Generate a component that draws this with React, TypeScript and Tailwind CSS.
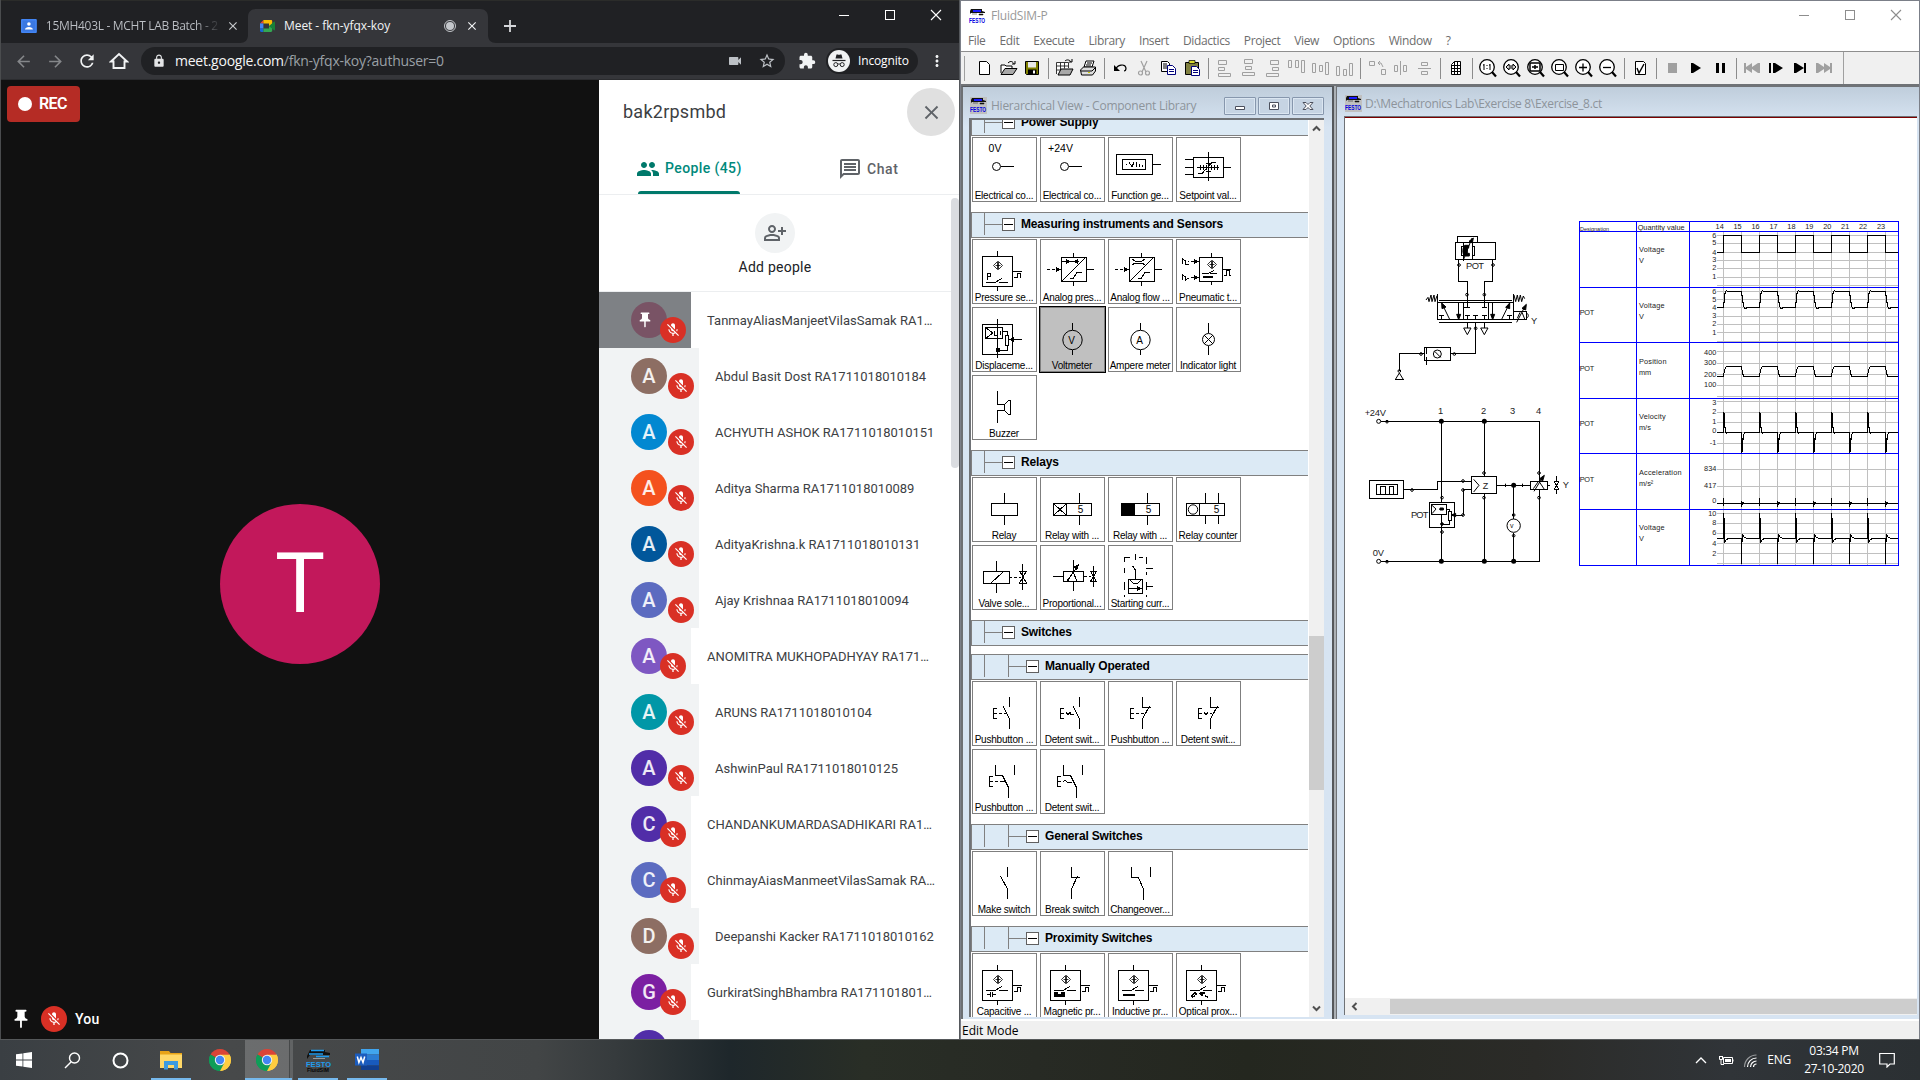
import React from "react";
import {
  MdArrowBack, MdArrowForward, MdRefresh, MdLock, MdVideocam, MdStarBorder, MdExtension, MdMoreVert,
  MdPeople, MdOutlineMessage, MdOutlinePersonAddAlt, MdMicOff, MdPushPin, MdClose,
} from "react-icons/md";

const UI = "font-['Open_Sans',sans-serif]";
const ROBOTO = "font-[Roboto,sans-serif]";

/* ---------- Browser window ---------- */

function WinControls({ color }: { color: string }) {
  return (
    <svg width="110" height="14" viewBox="0 0 110 14" fill="none" stroke={color} shapeRendering="crispEdges" className="block">
      <path d="M2 7.5h10M48.5 2.5h9v9h-9z" />
      <path d="M94 2l10 10M104 2l-10 10" shapeRendering="auto" strokeWidth="1.1" />
    </svg>
  );
}

function TabStrip() {
  return (
    <div className="flex h-[43px] bg-[#202124] border-t border-[#2b2c2a]">
      <div className="flex items-center w-[239px] h-[34px] mt-2 pl-5">
        <svg width="16" height="14" viewBox="0 0 16 14">
          <rect width="16" height="14" rx="1" fill="#4285f4" />
          <rect x="1.5" y="1.5" width="13" height="11" fill="#3b78e0" />
          <circle cx="8" cy="5" r="1.8" fill="#fff" />
          <path d="M4 10.5c0-3.4 8-3.4 8 0z" fill="#fff" />
        </svg>
        <span className={`${UI} ml-[9px] w-[178px] overflow-hidden whitespace-nowrap text-[12px] leading-4 tracking-[-0.3px] bg-gradient-to-r from-[#bdc1c6] from-85% to-[#202124] bg-clip-text text-transparent`}>15MH403L - MCHT LAB Batch - 2</span>
        <MdClose className="ml-1 size-3.5 text-[#c8cacd]" />
      </div>
      <div className="relative mt-2 flex h-[34px] w-[256px] items-center pl-[20px]">
        <svg className="absolute inset-0" width="256" height="34" viewBox="0 0 256 34">
          <path d="M0 34c5 0 8-3 8-8V8c0-5 3-8 8-8h224c5 0 8 3 8 8v18c0 5 3 8 8 8z" fill="#35363a" />
        </svg>
        <svg className="relative" width="16" height="12" viewBox="0 0 16 12">
          <path d="M3.4 0v3.4H0z" fill="#ea4335" />
          <path d="M0 3.4h3.4v5.2H0z" fill="#4285f4" />
          <path d="M0 8.6h3.4V12H1.2C.5 12 0 11.5 0 10.8z" fill="#1967d2" />
          <path d="M3.4 0H11c.7 0 1.2.5 1.2 1.2v3.2L9 6.2V3.4H3.4z" fill="#fbbc04" />
          <path d="M3.4 8.6H9V6l3.2 2v2.8c0 .7-.5 1.2-1.2 1.2H3.4z" fill="#34a853" />
          <path d="M9 6l5-4.2c.5-.4 1-.1 1 .5v7.4c0 .6-.5.9-1 .5z" fill="#188038" />
        </svg>
        <span className={`${UI} relative ml-2 w-[150px] whitespace-nowrap text-[12px] leading-4 tracking-[-0.06px] text-[#f1f3f4]`}>Meet - fkn-yfqx-koy</span>
        <svg className="relative ml-[9px]" width="14" height="14" viewBox="0 0 14 14">
          <circle cx="7" cy="7" r="5.5" fill="none" stroke="#c4c7cb" />
          <circle cx="7" cy="7" r="4" fill="#c4c7cb" />
        </svg>
        <MdClose className="relative ml-2 size-3.5 text-[#f1f3f4]" />
      </div>
      <svg className="ml-[7px] mt-[18px]" width="14" height="14" viewBox="0 0 14 14" stroke="#d5d7da" strokeWidth="1.8"><path d="M7 1v12M1 7h12" /></svg>
      <div className="ml-auto mr-[12px] mt-[7px]"><WinControls color="#fff" /></div>
    </div>
  );
}

function AddressBar() {
  return (
    <div className="flex h-[36px] items-center bg-[#35363a] pl-[13px] pr-[13px]">
      <MdArrowBack className="size-[19px] text-[#85878a]" />
      <MdArrowForward className="ml-[13px] size-[19px] text-[#85878a]" />
      <MdRefresh className="ml-[12px] size-[20px] text-[#f1f3f4]" />
      <svg className="ml-[12px]" width="20" height="20" viewBox="0 0 20 20" fill="none" stroke="#f1f3f4" strokeWidth="1.9"><path d="M2 10.5L10 3l8 7.5h-2.5V17h-11v-6.5z" /></svg>
      <div className="ml-[12px] flex h-[28px] w-[644px] items-center rounded-full bg-[#202124] pl-[11px] pr-[9px]">
        <MdLock className="size-[14px] text-[#e3e4e6]" />
        <span className={`${UI} ml-[9px] whitespace-nowrap text-[14px] leading-[18px] tracking-[-0.25px] text-[#f5f6f7]`}>meet.google.com<span className="text-[#9aa0a6]">/fkn-yfqx-koy?authuser=0</span></span>
        <MdVideocam className="ml-auto size-[16px] text-[#bdc1c6]" />
        <MdStarBorder className="ml-[15px] size-[18px] text-[#bdc1c6]" />
      </div>
      <MdExtension className="ml-[13px] size-[18px] text-[#f1f3f4]" />
      <div className="ml-[10px] flex h-[26px] w-[92px] items-center rounded-full bg-[#202124] pl-[2px]">
        <svg width="22" height="22" viewBox="0 0 22 22">
          <circle cx="11" cy="11" r="11" fill="#f1f3f4" />
          <path d="M7.5 8.5L8.500 4.500h1.500l1 .5 1-.5h1.500l1 4z" fill="#202124" />
          <path d="M4.500 10.500h13" stroke="#202124" strokeWidth="1.200" />
          <path d="M9.800 14.300c.8-.5 1.600-.5 2.400 0" fill="none" stroke="#202124" />
          <circle cx="7.800" cy="14.600" r="2" fill="none" stroke="#202124" /><circle cx="14.200" cy="14.600" r="2" fill="none" stroke="#202124" />
        </svg>
        <span className={`${UI} ml-[8px] text-[12px] leading-4 tracking-[-0.15px] text-white`}>Incognito</span>
      </div>
      <MdMoreVert className="ml-[10px] size-[18px] text-[#f1f3f4]" />
    </div>
  );
}

function Mic() {
  return (
    <span className="flex size-[26px] shrink-0 items-center justify-center rounded-full bg-[#d93025]">
      <MdMicOff className="size-[16px] text-white" />
    </span>
  );
}

type Person = { name: string; color: string; wide: boolean; pinned?: boolean };
const people: Person[] = [
  { name: "TanmayAliasManjeetVilasSamak RA1…", color: "#795365", wide: false, pinned: true },
  { name: "Abdul Basit Dost RA1711018010184", color: "#8d6e63", wide: true },
  { name: "ACHYUTH ASHOK RA1711018010151", color: "#0288d1", wide: true },
  { name: "Aditya Sharma RA1711018010089", color: "#f4511e", wide: true },
  { name: "AdityaKrishna.k RA1711018010131", color: "#01579b", wide: true },
  { name: "Ajay Krishnaa RA1711018010094", color: "#5c6bc0", wide: true },
  { name: "ANOMITRA MUKHOPADHYAY RA171…", color: "#7e57c2", wide: false },
  { name: "ARUNS RA1711018010104", color: "#0097a7", wide: true },
  { name: "AshwinPaul RA1711018010125", color: "#512da8", wide: true },
  { name: "CHANDANKUMARDASADHIKARI RA1…", color: "#512da8", wide: false },
  { name: "ChinmayAiasManmeetVilasSamak RA…", color: "#5c6bc0", wide: false },
  { name: "Deepanshi Kacker RA1711018010162", color: "#8d6e63", wide: true },
  { name: "GurkiratSinghBhambra RA171101801…", color: "#7b1fa2", wide: false },
  { name: "", color: "#512da8", wide: true },
];

function PersonRow({ p }: { p: Person }) {
  return (
    <div className="flex h-[56px] shrink-0 items-center">
      <div className={`relative h-full shrink-0 pl-[32px] pt-[10px] ${p.wide ? "w-[100px]" : "w-[92px]"} ${p.pinned ? "bg-[#7e8185]" : "bg-[#f1f3f4]"}`}>
        <div className="flex size-[36px] items-center justify-center rounded-full text-[20px] font-medium text-white/90" style={{ backgroundColor: p.color }}>
          {p.pinned ? <MdPushPin className="-ml-2 size-[18px] text-white" /> : p.name[0]}
        </div>
        <div className={`absolute top-[25px] ${p.wide ? "left-[69px]" : "left-[61px]"}`}><Mic /></div>
      </div>
      <span className="ml-4 mt-[2px] whitespace-nowrap text-[13px] tracking-[0.01px] text-[#3c4043]">{p.name}</span>
    </div>
  );
}

function MeetPanel() {
  return (
    <aside className={`${ROBOTO} relative flex h-full w-[360px] flex-col overflow-hidden bg-white`}>
      <div className="flex h-[64px] shrink-0 items-center justify-between pl-6 pr-1">
        <h1 className="text-[18px] leading-6 tracking-[0.25px] text-[#3c4043]">bak2rpsmbd</h1>
        <button className="flex size-12 items-center justify-center rounded-full bg-[#e0e0e0]"><MdClose className="size-[23px] text-[#5f6368]" /></button>
      </div>
      <div className="flex h-[51px] shrink-0 border-b border-[#eceef0]">
        <div className="ml-[37px] flex w-[106px] flex-col">
          <div className="flex h-[47px] items-center pt-[2px]">
            <MdPeople className="size-[24px] text-[#00796b]" />
            <span className="ml-[5px] whitespace-nowrap text-[14px] font-medium tracking-[0.4px] text-[#00897b]">People (45)</span>
          </div>
          <div className="ml-[2px] h-[3px] w-[102px] rounded-t bg-[#00796b]" />
        </div>
        <div className="ml-[96px] flex h-[50px] items-center">
          <MdOutlineMessage className="size-[24px] text-[#5f6368]" />
          <span className="ml-[5px] text-[14px] font-medium tracking-[0.6px] text-[#5f6368]">Chat</span>
        </div>
      </div>
      <div className="flex h-[97px] shrink-0 flex-col items-center border-b border-[#eceef0] pr-[8px] pt-[18px]">
        <span className="flex size-10 items-center justify-center rounded-full bg-[#f1f3f4]"><MdOutlinePersonAddAlt className="size-[24px] text-[#5f6368]" /></span>
        <span className="mt-[4px] text-[14px] tracking-[0.25px] text-[#202124]">Add people</span>
      </div>
      {people.map((p, i) => <PersonRow key={i} p={p} />)}
      <div className="absolute right-0 top-[118px] h-[270px] w-[8px] rounded bg-[#dadce0]" />
    </aside>
  );
}

function Browser() {
  return (
    <section className="flex w-[960px] flex-col border-l border-[#4a4c4e] border-r-[1px] border-r-[#55585c]">
      <TabStrip />
      <AddressBar />
      <div className="h-px bg-[#2b2c2f]" />
      <div className={`${ROBOTO} flex min-h-0 flex-1`}>
        <main className="flex flex-1 flex-col justify-between bg-[#111]">
          <div className="ml-[6px] mt-[6px] flex h-[36px] w-[73px] items-center rounded bg-[#b52c25] pl-[11px]">
            <span className="size-[14px] rounded-full bg-white" />
            <span className="ml-[7px] text-[16px] font-semibold leading-5 tracking-[-0.6px] text-white">REC</span>
          </div>
          <div className="mb-1 ml-[219px] mt-[44px] flex size-[160px] items-center justify-center rounded-full bg-[#c2185b] text-[84px] leading-none text-white">T</div>
          <div className="mb-[7px] flex items-center pl-[9px]">
            <MdPushPin className="size-[22px] text-white" />
            <span className="ml-[9px]"><Mic /></span>
            <span className="ml-[8px] text-[14px] font-medium tracking-[0.2px] text-white">You</span>
          </div>
        </main>
        <MeetPanel />
      </div>
    </section>
  );
}

/* ---------- FluidSIM window ---------- */

function Festo() {
  return (
    <svg width="17" height="17" viewBox="0 0 17 17" className="shrink-0 overflow-visible">
      <path d="M2 1h11v2l3 1v1H2L1 6V3z" fill="#111" /><path d="M4 2h8v2H4z" fill="#1a1aff" /><path d="M10 6h4v1h-4zM3 6h5" fill="#111" stroke="#111" strokeWidth=".5" />
      <text x="0" y="14.5" fontSize="7" fontWeight="700" fontFamily="Liberation Sans, sans-serif" fill="#0000e0" textLength="16" lengthAdjust="spacingAndGlyphs">FESTO</text>
    </svg>
  );
}

type Glyph = React.ReactNode | "|";
const G = "#a0a0a0";
const lens = (inner: React.ReactNode) => (
  <g>
    <circle cx="11" cy="11" r="7.3" fill="#fff" stroke="#000" strokeWidth="1.3" />
    <path d="M16 16l4 4.5" stroke="#000" strokeWidth="2.2" />
    {inner}
  </g>
);
const toolbar: Glyph[] = [
  <path d="M7.5 5.5h7l3 3v10h-10z" fill="#fff" stroke="#000" />,
  <g><path d="M5 17V9h4l1 1h6v2" fill="#fff" stroke="#000" /><path d="M5 18.5l4-6h12l-4 6z" fill="#a8a8a8" stroke="#000" /><path d="M12 7c3-3 5-1 6 1m1-3v3h-3" fill="none" stroke="#000" /></g>,
  <g><path d="M5.5 5.5h13v13h-12l-1-1z" fill="#808000" stroke="#000" /><path d="M8 6h8v5.5H8z" fill="#e8e8e8" /><path d="M8 13.5h8.5v5H8z" fill="#000" /><path d="M13 14.5h2v3h-2z" fill="#fff" /></g>,
  "|",
  <g><path d="M4.5 18V6.5h12V12M8.5 6.5v11M12.5 6.5v6M4.5 10h12M4.5 14h6" fill="#fff" stroke="#222" strokeWidth=".9" /><path d="M6 19l3-6h12l-3 6z" fill="#a8a8a8" stroke="#000" /><path d="M13 5c2-2 5-1 6 1m1-3v3h-3" fill="none" stroke="#000" /></g>,
  <g><path d="M8 11l2-6h8l-2 6z" fill="#fff" stroke="#000" /><path d="M4.5 14l3-3h12v4l-3 4h-11z" fill="#ddd" stroke="#000" /><path d="M5 15h11l3-3M11 7h5M10 9h5" stroke="#000" fill="none" /><path d="M12 16.5h2" stroke="#cc0" /></g>,
  "|",
  <g><path d="M8 13c1-4 9-6 10-1 0 2-1 3-2 3" fill="none" stroke="#000" strokeWidth="1.2" /><path d="M6 9v6h6z" fill="#000" /></g>,
  <g fill="none" stroke={G} strokeWidth="1.2"><path d="M9 5l5 11M15 5l-5 11" /><circle cx="8.5" cy="17" r="2" /><circle cx="15.5" cy="17" r="2" /></g>,
  <g><path d="M5.5 5.5h6l2 2v8h-8z" fill="#fff" stroke="#000" /><path d="M7 8h4M7 10h4M7 12h4" stroke="#000" /><path d="M11.5 9.5h5l3 3v6h-8z" fill="#fff" stroke="#00007b" /><path d="M13 13.5h5M13 15.5h5" stroke="#00007b" /></g>,
  <g><path d="M5.5 6.5h13v12h-13z" fill="#808040" stroke="#000" /><path d="M9 4.5h6v3H9z" fill="#dcdc30" stroke="#000" strokeWidth=".7" /><path d="M11.5 10.5h5l3 3v6h-8z" fill="#fff" stroke="#00007b" /><path d="M13 14.5h5M13 16.5h5" stroke="#00007b" /></g>,
  "|",
  <path d="M6.5 4.5h8v4h-8zM6.5 11.5h6v3h-6zM6.5 17.5h12v3h-12z" fill="none" stroke={G} />,
  <path d="M8.5 3.5h8v4h-8zM9.5 10.5h6v3h-6zM6.5 16.5h12v3h-12z" fill="none" stroke={G} />,
  <path d="M10.5 4.5h8v4h-8zM12.5 11.5h6v3h-6zM6.5 17.5h12v3h-12z" fill="none" stroke={G} />,
  <path d="M4.5 4.5h3v7h-3zM11.5 4.5h3v7h-3zM17.5 4.5h3v12h-3z" fill="none" stroke={G} />,
  <path d="M4.5 7.5h3v9h-3zM11.5 9.5h3v6h-3zM17.5 6.5h3v12h-3z" fill="none" stroke={G} />,
  <path d="M4.5 10.5h3v9h-3zM11.5 13.5h3v6h-3zM17.5 7.5h3v12h-3z" fill="none" stroke={G} />,
  "|",
  <g fill="none" stroke={G}><path d="M5.5 5.5h5v4h-5zM17.5 13.5h4v5h-4zM14 7h3l2 4m-5-4l2-2m-2 2l2 2" /></g>,
  <path d="M12.5 5v14M6.5 9.5h3v6h-3zM15.5 9.5h3v6h-3z" fill="none" stroke={G} />,
  <path d="M6 12.5h13M9.5 6.5h6v3h-6zM9.5 15.5h6v3h-6z" fill="none" stroke={G} />,
  "|",
  <path d="M7.5 8.5l3-3h6v13h-9zM10.5 5.5v13M13.5 5.5v13M7.5 9.5h9M7.5 12.5h9M7.5 15.5h9" fill="#fff" stroke="#000" />,
  "|",
  lens(<path d="M8 8v6M14 8v6M7 9h1M13 9h1M11 9v1M11 12v1" stroke="#000" fill="none" />),
  lens(<path d="M6 11l3-3v2h4V8l3 3-3 3v-2H9v2z" fill="#ccc" stroke="#000" />),
  lens(<path d="M6 7h10v8H6zM8 11h6M11 9v4" fill="none" stroke="#000" strokeWidth="1.5" />),
  lens(<path d="M7.5 8.5h8v6h-8z" fill="none" stroke="#000" />),
  lens(<path d="M7 11.5h8M11 7.5v8" stroke="#000" strokeWidth="1.3" />),
  lens(<path d="M7 11.5h8" stroke="#000" strokeWidth="1.3" />),
  "|",
  <g fill="none" stroke="#000"><path d="M7.5 5.5h8l2 2v11h-10z" fill="#fff" /><path d="M9 12l2 5 5-9" strokeWidth="1.4" /></g>,
  "|",
  <path d="M8 7h9v10H8z" fill={G} />,
  <path d="M7 7h2l8 5-8 5H7z" fill="#000" />,
  <path d="M8 7h3v10H8zM14 7h3v10h-3z" fill="#000" />,
  "|",
  <path d="M4 7h2v4l6-4v4l6-4h2v10h-2l-6-4v4l-6-4v4H4z" fill={G} />,
  <path d="M5 7h2v10H5zM9 7h2l8 5-8 5H9z" fill="#000" />,
  <path d="M6 7h2l8 5V7h2v10h-2v-5l-8 5H6z" fill="#000" />,
  <path d="M4 7h2l6 4V7l6 4V7h2v10h-2v-4l-6 4v-4l-6 4H4z" fill={G} />,
];

function Toolbar() {
  return (
    <div className="flex h-[33px] items-center border-t border-[#8e8e8e] bg-[#f0f0f0]">
      <div className="ml-[3px] mr-[7px] h-[25px] w-px bg-[#a0a0a0]" />
      {toolbar.map((g, i) =>
        g === "|" ? (
          <div key={i} className="flex w-[8px] justify-center"><div className="h-[21px] w-px bg-[#8c8c8c]" /></div>
        ) : (
          <svg key={i} width="24" height="24" viewBox="0 0 24 24" className="shrink-0">{g}</svg>
        ))}
      <div className="ml-[7px] h-full w-px bg-[#a0a0a0]" />
    </div>
  );
}

/* Component symbols, drawn in a 63 x 50 cell */
const T = ({ x, y, s = 10, children }: { x: number; y: number; s?: number; children: React.ReactNode }) => (
  <text x={x} y={y} fontSize={s} fill="#000" stroke="none" textAnchor="middle" fontFamily="Liberation Sans, sans-serif" shapeRendering="auto">{children}</text>
);
const diamond = (x: number, y: number) => <path d={`M${x} ${y - 4}l-4 4 4 4zM${x + 1} ${y - 4}l4 4-4 4zM${x - 2} ${y}h5`} strokeWidth="0.8" shapeRendering="auto" />;
const valve = (x: number, y: number) => <path d={`M${x}.5 ${y - 13}v26M${x - 3}.5 ${y - 6}h7l-7 12h7z`} />;
const sensor = (extra: React.ReactNode) => (
  <g>
    <path d="M10.5 17.5h30v30h-30zM25.5 12v5M25.5 48v4M14 37.5h9l7-4M27 37.5h9M41 32.5h9M42 38.5h3v-4h3v4h1" />
    {diamond(25.5, 26.5)}
    {extra}
  </g>
);
const eAct = (x: number) => <path d={`M${x + 4} 27.5h-3.5v10h3.5M${x} 32.5h4`} />;
const blackTri = (d: string) => <path d={d} fill="#000" stroke="none" />;

const symbols: Record<string, React.ReactNode> = {
  v0: <g><T x={23} y={15} s={10.5}>0V</T><circle cx="24.5" cy="29.5" r="4" shapeRendering="auto" /><path d="M29 29.5h13" /></g>,
  v24: <g><T x={20.5} y={15} s={10.5}>+24V</T><circle cx="24.5" cy="29.5" r="4" shapeRendering="auto" /><path d="M29 29.5h13" /></g>,
  func: <g><path d="M8.5 17.5h36v20h-36zM14.5 22.5h23v10h-23zM45 27.5h8" /><path d="M18 27v1M21 25l3 5 2-5M28 25v5M31 27v3M34 28v2" /></g>,
  setp: <g><path d="M17.5 20.5h30v20h-30zM9 22.5h8M9 30.5h8M9 37.5h8M48 30.5h7M32.5 15v29M21 30.5h22M24.5 28v5M27.5 28v5M30.5 28v5M35.5 28v5M38.5 28v5M41.5 28v5M30 26.5h5M30 34.5h5M22 36.5h4l10-11h4" /></g>,
  press: (
    <g>
      <path d="M10.5 17.5h30v30h-30zM25.5 12v5M25.5 48v4M14 43.5h9l7-4M27 43.5h9M41 32.5h9M42 38.5h3v-4h3v4h1M15.5 34v7M15.5 34.500h2.500v3h-2" />
      {diamond(25.5, 26.5)}
    </g>
  ),
  apres: <g><path d="M21.5 18.5h25v24h-25zM22 42l24-24M33.5 14v4M33.5 43v4M47 30.5h7M7 30.5h3M12 30.5h3M22 22.5h17M30 39.5h3l4-6h5" />{blackTri("M16 28l5 2.5-5 2.5zM26 20l5 2.5-5 2.5zM38 20l-5 2.5 5 2.5z")}</g>,
  aflow: <g><path d="M21.5 18.5h25v24h-25zM22 42l24-24M33.5 14v4M33.5 43v4M47 30.5h7M7 30.5h3M12 30.5h3M24 20l3 2h7l3-2M24 26l3-2h7l3 2M30 39.5h3l4-6h5" />{blackTri("M16 28l5 2.5-5 2.5z")}</g>,
  pneu: <g><path d="M23.5 18.5h23v24h-23zM35.5 14v4M35.5 43v3M15 22.5h3M15 38.5h3M26 34.5h6l6-3M34 34.5h7M47 30.5h8M48 36.5h2v-5h3v5h2M6.5 25v-5l3 2v3h3M6.5 41v-5l3 2v3l3-2M12 22.500h1" />{diamond(35.5, 25.5)}{blackTri("M18 20l5 2.5-5 2.5zM18 36l5 2.5-5 2.5zM27 37h10v2H27z")}</g>,
  disp: <g><path d="M10.5 17.5h30v30h-30zM13.5 20.5h17v11h-17zM25.5 12v39M14 21l7 5-7 5M22.5 24v4h3M28 24v4M31 24.5h4v4M33.5 28.5h3v10h-3zM35.5 39v4h-10M38 32.5h12" />{blackTri("M42 30l-5 2.5 5 2.5zM24 41h4v4h-4z")}</g>,
  volt: <g><circle cx="32.5" cy="33" r="9.7" shapeRendering="auto" /><path d="M32.5 16v7M32.5 43v5" /><T x={31.5} y={36.5} s={10}>V</T></g>,
  amp: <g><circle cx="32.5" cy="33" r="9.7" shapeRendering="auto" /><path d="M32.5 16v7M32.5 43v5" /><T x={31.5} y={36.5} s={10}>A</T></g>,
  lamp: <g><g shapeRendering="auto"><circle cx="32.5" cy="32.5" r="6" /><path d="M28 28l9 9M37 28l-9 9" /></g><path d="M32.5 16v10M32.5 39v9" /></g>,
  buzz: <path d="M25.5 16v13.5h7v6h-7V48M32.5 29.5l4-4h2v14h-2l-4-4" />,
  relay: <path d="M19.5 26.5h26v12h-26zM32.5 16v10M32.5 39v9" />,
  ron: <g><path d="M13.5 26.5h38v12h-38zM26.5 26v12M39.5 16v10M39.5 39v9M14 27l12 11M26 27L14 38" /><T x={40.5} y={36}>5</T></g>,
  roff: <g><path d="M13.5 26.5h38v12h-38zM39.5 16v10M39.5 39v9" />{blackTri("M14 27h13v11H14z")}<T x={40.5} y={36}>5</T></g>,
  rcnt: <g><path d="M10.5 26.5h38v12h-38zM23.5 26v12M29.5 16v10M29.5 39v8M42.5 16v10M42.5 39v8" /><circle cx="17" cy="32.5" r="4.7" shapeRendering="auto" /><T x={40.5} y={36}>5</T></g>,
  valve: <g><path d="M11.5 26.5h26v12h-26zM24.5 16v10M24.5 39v9M19 38l12-11M38 32.5h2M42 32.5h3M47 32.5h2" />{valve(50, 32)}</g>,
  prop: <g><path d="M23.5 26.5h20v10h-20zM13 31.5h10M33.5 15v11M33.5 37v9M27 36l11-15M33 27l4 9M28 36l5-9M44 31.5h3M49 31.5h2" />{blackTri("M39 19l-6 3 4 4z")}<path d="M53.5 21v21M50.5 26.5h6l-6 10h6z" /></g>,
  start: <g><path d="M16.5 17v-4.5h5M27.5 9v6M31 12.5h4M38.5 12v7M38 23.5h7M16.5 23v5M38.5 27v3M16.5 37v8M38.5 37v8M38 41.5h7M16.5 50v2M38.5 50v2M24.5 21l3 4v9M20.5 34.5h14v14h-14zM22 35l3 3h5l3-3M21 43.5h13" />{blackTri("M29 41l5 2.5-5 2.5z")}</g>,
  pno: <g>{eAct(21)}<path d="M27 32.5h3M32 32.5h2M31 25l6.5 13v10M37.5 16v10" /></g>,
  dno: <g>{eAct(20)}<path d="M26 31.5l2 2 2-2 1 2h3M33 25l6.5 13v10M39.5 16v10" /></g>,
  pnc: <g>{eAct(22)}<path d="M28 32.5h3M33 32.5h3M34.5 16v10.500h8M41.5 25l-7 13v10" /></g>,
  dnc: <g>{eAct(22)}<path d="M28 31.500l2 2 2-2M34 32.500h2M34.500 16v10.500h8M41.500 25l-7 13v10" /></g>,
  pco: <g>{eAct(17)}<path d="M23 32.500h3M28 32.500h5M23.500 16v10.500h7l6 12v10M42.500 16v10" /></g>,
  dco: <g>{eAct(17)}<path d="M23 33l2-2 2 2h5M23.500 16v10.500h7l6 12v10M42.500 16v10" /></g>,
  make: <path d="M28.500 25l7 13v10M35.500 16v10" />,
  brk: <path d="M31.500 16v10.500h8M37.500 25l-6 13v10" />,
  chg: <path d="M23.500 16v10.500h7l5 12v10M42.500 16v10" />,
  cap: sensor(<path d="M15 41.500h3M18.500 39v5M20.500 39v5M21 41.500h3" />),
  mag: sensor(blackTri("M14 39h4v2h3v-2h4v5H14z")),
  ind: sensor(blackTri("M15 41h12v2H15z")),
  opt: sensor(<path d="M15 43l4-3 2 2M16 44l3-1M24 40h5M24 40l3 3M29 43l3 1" strokeWidth="1.500" />),
};

function Card({ id, label, selected }: { id: string; label: string; selected?: boolean }) {
  return (
    <div className={`flex h-[65px] w-[65px] flex-col items-center border border-[#7f7f7f] ${selected ? "bg-[#c0c0c0] outline outline-1 outline-black" : "bg-white"}`}>
      <svg width="63" height="51" viewBox="1 1 63 51" fill="none" stroke="#000" shapeRendering="crispEdges" className="shrink-0">{symbols[id]}</svg>
      <span className="whitespace-nowrap pr-px font-['Liberation_Sans',Arial,sans-serif] text-[10px] leading-[13px] tracking-[-0.22px] text-black">{label}</span>
    </div>
  );
}

function Header({ title, nested }: { title: string; nested?: boolean }) {
  return (
    <div className="flex h-[26px] shrink-0 border-y border-l border-[#808080] bg-[#dceaf5]">
      <div className="ml-[12px] h-[22px] w-px bg-[#808080]" />
      {nested && <div className="ml-[23px] h-[22px] w-px bg-[#808080]" />}
      <div className="mt-[11px] h-px w-[17px] bg-[#808080]" />
      <div className="mt-[5px] flex size-[13px] items-center justify-center border border-[#606060] bg-white"><div className="h-px w-[9px] bg-black" /></div>
      <span className="ml-[6px] mt-[4px] whitespace-nowrap font-['Liberation_Sans',Arial,sans-serif] text-[12px] font-bold leading-[15px] tracking-[-0.16px] text-black">{title}</span>
    </div>
  );
}

type Item = [string, string];
const library: { title: string; nested?: boolean; items: Item[] }[] = [
  { title: "Power Supply", items: [["v0", "Electrical co..."], ["v24", "Electrical co..."], ["func", "Function ge..."], ["setp", "Setpoint val..."]] },
  { title: "Measuring instruments and Sensors", items: [["press", "Pressure se..."], ["apres", "Analog pres..."], ["aflow", "Analog flow ..."], ["pneu", "Pneumatic t..."], ["disp", "Displaceme..."], ["volt", "Voltmeter"], ["amp", "Ampere meter"], ["lamp", "Indicator light"], ["buzz", "Buzzer"]] },
  { title: "Relays", items: [["relay", "Relay"], ["ron", "Relay with ..."], ["roff", "Relay with ..."], ["rcnt", "Relay counter"], ["valve", "Valve sole..."], ["prop", "Proportional..."], ["start", "Starting curr..."]] },
  { title: "Switches", items: [] },
  { title: "Manually Operated", nested: true, items: [["pno", "Pushbutton ..."], ["dno", "Detent swit..."], ["pnc", "Pushbutton ..."], ["dnc", "Detent swit..."], ["pco", "Pushbutton ..."], ["dco", "Detent swit..."]] },
  { title: "General Switches", nested: true, items: [["make", "Make switch"], ["brk", "Break switch"], ["chg", "Changeover..."]] },
  { title: "Proximity Switches", nested: true, items: [["cap", "Capacitive ..."], ["mag", "Magnetic pr..."], ["ind", "Inductive pr..."], ["opt", "Optical prox..."]] },
];

function FrameButton({ children }: { children: React.ReactNode }) {
  return (
    <div className="flex h-[18px] w-[32px] items-center justify-center rounded-[1px] border border-[#8797ad] bg-[#c6d4e3] shadow-[inset_0_0_0_1px_#dbe6f1]">
      <svg width="14" height="12" viewBox="0 0 14 12" fill="#fff" stroke="#4b4f5c">{children}</svg>
    </div>
  );
}

function LibraryWindow() {
  return (
    <div className="flex w-[373px] flex-col border-x-2 border-t border-[#55585c] border-l-[#6d7074] bg-gradient-to-b from-[#bfcddb] to-[#d7e4f2] to-[40px]">
      <div className="flex h-[31px] items-center pl-[7px] pr-[8px] pt-[6px]">
        <span className="bg-[#c0c0c0]"><Festo /></span>
        <span className={`${UI} ml-[4px] whitespace-nowrap text-[12px] tracking-[-0.25px] text-[#8d949b]`}>Hierarchical View - Component Library</span>
        <div className="ml-auto flex gap-[2px]">
          <FrameButton><path d="M2.500 6.500h9v3h-9z" /></FrameButton>
          <FrameButton><path d="M2.500 2.500h9v7h-9zM5.500 5h3v2h-3z" /></FrameButton>
          <FrameButton><path d="M2 2.500h3l2 2 2-2h3L8.800 6 12 9.500H9l-2-2-2 2H2L5.200 6z" /></FrameButton>
        </div>
      </div>
      <div className="ml-[6px] mr-[8px] flex min-h-0 flex-1 border-l-2 border-t-2 border-[#6f7276] bg-white">
        <div className="flex w-[337px] flex-col overflow-hidden">
          <div className="-mt-[10px] flex flex-col">
            {library.map((s) => (
              <React.Fragment key={s.title}>
                <Header title={s.title} nested={s.nested} />
                {s.items.length ? (
                  <div className="mb-[10px] ml-px mt-px grid grid-cols-[repeat(4,65px)] gap-[3px]">
                    {s.items.map(([id, label]) => <Card key={id} id={id} label={label} selected={id === "volt"} />)}
                  </div>
                ) : <div className="h-[8px]" />}
              </React.Fragment>
            ))}
          </div>
        </div>
        <div className="ml-px flex w-[15px] flex-col items-center justify-between bg-[#f0f0f0] py-[4px]">
          <svg width="9" height="9" viewBox="0 0 9 9" fill="none" stroke="#505050" strokeWidth="2"><path d="M1 6.500L4.500 3 8 6.500" /></svg>
          <div className="mt-[289px] h-[154px] w-[15px] shrink-0 bg-[#cdcdcd]" />
          <svg width="9" height="9" viewBox="0 0 9 9" fill="none" stroke="#505050" strokeWidth="2"><path d="M1 2.500L4.500 6 8 2.500" /></svg>
        </div>
      </div>
      <div className="h-[2px] bg-[#d7e4f2]" />
    </div>
  );
}

const lbl = { fontFamily: "Liberation Sans, sans-serif", fill: "#222", stroke: "none" };

/* Pneumatic and electrical circuit, three units per pixel */
function Circuit() {
  const ports: [number, number][] = [[327, 135], [429, 135], [351, 224], [403, 224], [377, 325], [213, 402], [313, 402], [148, 453], [111, 605], [111, 1025], [402, 759], [402, 833], [567, 759], [567, 833], [276, 833], [276, 936], [186, 810], [339, 783], [339, 810], [339, 885], [491, 885], [491, 947]];
  const dots: [number, number][] = [[274, 604], [403, 604], [491, 796], [274, 1024], [403, 1024], [491, 1024]];
  return (
    <svg width="240" height="360" viewBox="0 0 720 1080" fill="none" stroke="#000" strokeWidth="3" className="absolute left-[5px] top-[102px]">
      <g shapeRendering="crispEdges">
        <path d="M316.500 67.500h120v51h-120zM322.500 67v-18h60v18M340.500 67v57M367.500 67v51M334.500 79.500h6v27h-6zM367.500 79.500h6v27h-6zM325.500 118v66h27v54M427.500 118v66h-24v54" />
        <path d="M262.500 247.500h228v51h-228zM340.500 247v51M415.500 247v51M267 241.500h220M267 307.500h220M262.500 222v25M490.500 222v25M352.500 238v25M343 262.500h16M403.500 238v25M396 262.500h16M352.500 298v-11M345 286.500h14M376.500 298v-11M369 286.500h14M403.500 298v-11M396 286.500h14M274.500 298v-11M267 286.500h14M478.500 298v-11M471 286.500h14M490.500 274.500h39v24h-39M325.500 247v42M427.500 247v42M352.500 307v17M403.500 307v17M376.500 307v93h-75M222.500 382.500h79v39h-79zM229.500 385v16M229.500 412v24M222 400.500h-73v51M136 477.500h25" />
        <path d="M93 604.500h475v180M568.500 808v216H93M274.500 604v246M274.500 885v139M403.500 604v165M403.500 820v204M58.500 781.500h102v54h-102zM79.500 793.500h63v30h-63zM91 823v-24h15v24h12v-24h13v24M160 808.500h102v-24h102M364.500 769.500h75v51h-75zM439 796.500h102M340.500 885v-78h24M238.500 847.500h75v75h-75zM244.500 853.500h45v30h-45zM289 868.500h9v8M295.500 874.500h8v27h-8zM298.500 901v12h-24M303 885.500h37M490.500 796v102M490.500 938v86M541.500 784.500h51v24h-51zM594 796.500h6M619.500 768v14M619.500 810v12M613 784.500h13l-13 24h13z" />
      </g>
      <path d="M340 120l26-66M228 240l6-8 3 13 6-20 3 20 6-20 3 20 6-18M492 225l5 20 5-20 4 20 5-20 4 20 5-17 4 8M299 298l-22-45M455 298l22-45M500 307l26-50M502 295l8-18M516 277l8 20M137 477l11-18 11 18M371 778l16 18-16 20M552 814l26-42M567 784l16 24M550 806l14-20M246 856l12 11-12 14M254 394l18 18" />
      <path d="M344 76h12v8h-4v16h6v8h-15c-6-8-6-24 1-32z" fill="#000" />
      <path d="M268 868h14M370 54l-13 10 10 5zM275 249l13 12-12 5zM479 249l-12 13 12 4zM320 283h12l-6 16zM422 283h12l-6 16zM529 253l-13 12 11 5zM583 766l-14 10 9 7zM303 885l14-5v10zM270 870v-6h10v6z" fill="#000" />
      <path d="M341 324h22l-11 20zM392 324h22l-11 20zM529 279c8 3 8 12 0 16" />
      <circle cx="262" cy="402" r="12" /><circle cx="86" cy="604" r="6" /><circle cx="86" cy="1024" r="6" /><circle cx="491" cy="917" r="20" />
      <circle cx="276" cy="912" r="4" fill="#000" />
      <path d="M466.500 791v10M517.500 791v10" />
      {ports.map(([x, y]) => <circle key={`${x}-${y}`} cx={x} cy={y} r="4" />)}
      {dots.map(([x, y]) => <circle key={`${x}-${y}`} cx={x} cy={y} r="7.500" fill="#000" stroke="none" />)}
      <g fontSize="28" {...lbl}>
        <text x="348" y="146" textLength="54">POT</text><text x="543" y="311">Y</text><text x="183" y="893" textLength="52">POT</text>
        <text x="44" y="588" textLength="64">+24V</text><text x="68" y="1007" textLength="34">0V</text>
        <text x="264" y="582">1</text><text x="393" y="582">2</text><text x="480" y="582">3</text><text x="558" y="582">4</text>
        <text x="638" y="804">Y</text><text x="398" y="807" fontSize="27">Z</text><text x="480" y="925" fontSize="21">v</text>
      </g>
    </svg>
  );
}

const ks = [0, 1, 2, 3, 4];
const wave = (start: string, seg: (x: number) => string) => start + ks.map((k) => seg(460.5 + 108 * k)).join("") + "H985";
const waves = [
  wave("M441 127.500", (x) => `H${x}V76.500H${x + 54}V127.500`),
  wave("M441 292.500", (x) => `H${x}l5 -46l4 -5l4 3H${x + 54}l3 24l4 22l4 6l6 -4`),
  wave("M441 499.500", (x) => `H${x}l3 -20l5 -10H${x + 54}l3 20l4 10`),
  wave("M441 667.500", (x) => `H${x}V609l3 4l2 50l4 7l4 -3H${x + 54}V728l3 -7l2 -44l5 -10`),
  wave("M441 880.500", (x) => `H${x}V865v20l3 -5H${x + 54}V874v18l3 -15l5 3.500`),
  wave("M441 985.500", (x) => `H${x}V910l3 30l1 55l5 -7l8 -3H${x + 54}V1061l2 -88l6 9l8 3`),
];
const rows: { lines: number[]; ticks: [string, number][]; q: string; u: string; ty: number; pot?: number }[] = [
  { lines: [76.5, 100.5, 127.5, 151.5, 175.5, 202.5, 226.5], ticks: [["6", 77], ["5", 98], ["4", 126], ["3", 149], ["2", 172], ["1", 200]], q: "Voltage", u: "V", ty: 126 },
  { lines: [244.5, 268.5, 292.5, 319.5, 343.5, 367.5, 394.5], ticks: [["6", 245], ["5", 267], ["4", 292], ["3", 317], ["2", 341], ["1", 366]], q: "Voltage", u: "V", ty: 294, pot: 314 },
  { lines: [424.5, 460.5, 493.5, 526.5, 559.5], ticks: [["400", 428], ["300", 458], ["200", 492], ["100", 524]], q: "Position", u: "mm", ty: 462, pot: 482 },
  { lines: [574.5, 607.5, 637.5, 667.5, 700.5], ticks: [["3", 578], ["2", 605], ["1", 635], ["0", 660], ["-1", 698]], q: "Velocity", u: "m/s", ty: 627, pot: 647 },
  { lines: [778.5, 829.5, 880.5], ticks: [["834", 776], ["417", 827], ["0", 872]], q: "Acceleration", u: "m/s²", ty: 795, pot: 815 },
  { lines: [910.5, 940.5, 970.5, 1000.5, 1030.5, 1060.5], ticks: [["10", 911], ["8", 938], ["6", 968], ["4", 999], ["2", 1029]], q: "Voltage", u: "V", ty: 961 },
];

/* State diagram, three units per pixel */
function StateDiagram() {
  return (
    <svg width="350" height="370" viewBox="0 0 1050 1110" fill="none" strokeWidth="3" className="absolute left-[225px] top-[92px]">
      <g shapeRendering="crispEdges">
        <g stroke="#c0c0c0">
          {rows.flatMap((r) => r.lines).map((y) => <path key={y} d={`M441 ${y}H985`} />)}
          {Array.from({ length: 10 }, (_, i) => <path key={i} d={`M${460.5 + 54 * i} 66V1064`} />)}
        </g>
        <path stroke="#0000ff" d="M28.500 34.500h957v1032h-957zM199.500 34v1032M358.500 34v1032M28 64.500h957M28 232.500h957M28 397.500h957M28 565.500h957M28 730.500h957M28 898.500h957" />
      </g>
      <g stroke="#000" strokeWidth="3.200">{waves.map((d, i) => <path key={i} d={d} shapeRendering="crispEdges" />)}</g>
      <g fontSize="22" {...lbl}>
        <text x="30" y="62" fontSize="14" textLength="87" lengthAdjust="spacingAndGlyphs">Designation</text>
        <text x="203" y="59" textLength="141">Quantity value</text>
        {Array.from({ length: 10 }, (_, i) => <text key={i} x={449 + 53.8 * i} y="57" textAnchor="middle">{14 + i}</text>)}
        {rows.map((r, i) => (
          <g key={i}>
            {r.ticks.map(([t, y]) => <text key={t} x="439" y={y + 8} textAnchor="end">{t}</text>)}
            <text x="207" y={r.ty} letterSpacing="0.600">{r.q}</text>
            <text x="207" y={r.ty + 32}>{r.u}</text>
            {r.pot && <text x="29" y={r.pot} textLength="44">POT</text>}
          </g>
        ))}
      </g>
    </svg>
  );
}

function CircuitWindow() {
  return (
    <div className="flex min-w-0 flex-1 flex-col border-l border-t border-[#6f7276] bg-gradient-to-b from-[#bfcddb] to-[#d7e4f2] to-[34px]">
      <div className="flex h-[29px] items-center pl-[8px] pt-[4px]">
        <span className="bg-[#c0c0c0]"><Festo /></span>
        <span className={`${UI} ml-[3px] whitespace-nowrap text-[12px] tracking-[-0.32px] text-[#8d949b]`}>D:\Mechatronics Lab\Exercise 8\Exercise_8.ct</span>
      </div>
      <div className="ml-[7px] mr-[2px] flex min-h-0 flex-1 flex-col border-l border-t border-[#6f7276] bg-white">
        <div className="relative flex-1 border-t border-[#7b0000]">
          <Circuit />
          <StateDiagram />
        </div>
        <div className="flex h-[17px] items-center bg-[#f0f0f0] pl-[5px]">
          <svg width="9" height="9" viewBox="0 0 9 9" fill="none" stroke="#505050" strokeWidth="2"><path d="M6.500 1L3 4.500 6.500 8" /></svg>
          <div className="ml-[31px] h-[15px] flex-1 bg-[#cdcdcd]" />
        </div>
      </div>
      <div className="h-[4px] bg-[#d7e4f2]" />
    </div>
  );
}

function FluidSim() {
  return (
    <section className="flex w-[960px] flex-col border-x border-t border-[#7b7f88] bg-white">
      <div className="flex h-[28px] items-center pl-[8px] pt-[2px]">
        <Festo />
        <span className={`${UI} ml-[5px] text-[12px] tracking-[-0.22px] text-[#999]`}>FluidSIM-P</span>
        <div className="ml-auto mr-[12px] -mt-[2px]"><WinControls color="#8d8d8d" /></div>
      </div>
      <div className={`${UI} flex h-[22px] gap-[14px] pl-[7px] pt-[4px] text-[12px] leading-4 tracking-[-0.38px] text-[#6d6d6d]`}>
        {["File", "Edit", "Execute", "Library", "Insert", "Didactics", "Project", "View", "Options", "Window", "?"].map((m) => <span key={m}>{m}</span>)}
      </div>
      <Toolbar />
      <div className="flex min-h-0 flex-1 border-t-2 border-[#6f7276] bg-[#abb0b5]">
        <LibraryWindow />
        <div className="w-[2px] bg-[#abb0b5]" />
        <CircuitWindow />
      </div>
      <div className={`${UI} h-[20px] border-t-2 border-white bg-[#f0f0f0] pl-px pt-px text-[12px] leading-[17px] text-black`}>Edit Mode</div>
    </section>
  );
}

/* ---------- Taskbar ---------- */

function Chrome() {
  return (
    <svg width="24" height="24" viewBox="0 0 24 24">
      <path d="M12 12L2.500 6.500A11 11 0 0 1 21.500 6.500z" fill="#db4437" />
      <path d="M12 12l9.500-5.500A11 11 0 0 1 12 23z" fill="#ffcd40" />
      <path d="M12 12v11A11 11 0 0 1 2.500 6.500z" fill="#0f9d58" />
      <path d="M12 6.800h9.700A11 11 0 0 1 12 23l4.500-8.400z" fill="#ffcd40" />
      <path d="M7.500 14.600L2.500 6.500A11 11 0 0 0 12 23l4.500-8.400z" fill="#0f9d58" />
      <circle cx="12" cy="12" r="5.200" fill="#f1f1f1" /><circle cx="12" cy="12" r="4.200" fill="#4285f4" />
    </svg>
  );
}

function TaskItem({ children, className = "", bar = "" }: { children: React.ReactNode; className?: string; bar?: string }) {
  return (
    <div className={`relative flex h-full w-[48px] items-center justify-center ${className}`}>
      {children}
      {bar && <div className={`absolute bottom-0 h-[2px] bg-[#76b9ed] ${bar}`} />}
    </div>
  );
}

function Taskbar() {
  return (
    <footer className="flex h-[41px] border-t border-[#55585a] bg-[linear-gradient(90deg,#3a3f43_0%,#47494a_12%,#424546_28%,#363b3d_32%,#1e272b_38%,#292e26_45%,#272a24_54%,#24271f_65%,#2b2b28_80%,#303438_90%,#2b3033_100%)]">
      <TaskItem><svg width="16" height="16" viewBox="0 0 16 16" fill="#fff"><path d="M0 2.300l6.500-.9v6.200H0zM7.300 1.300L16 0v7.600H7.300zM0 8.400h6.500v6.200L0 13.700zM7.300 8.400H16V16l-8.700-1.200z" /></svg></TaskItem>
      <TaskItem><svg width="17" height="17" viewBox="0 0 17 17" fill="none" stroke="#fff" strokeWidth="1.400"><circle cx="10.500" cy="6" r="5" /><path d="M7 10l-6 6" /></svg></TaskItem>
      <TaskItem><svg width="17" height="17" viewBox="0 0 17 17" fill="none" stroke="#fff" strokeWidth="2"><circle cx="8.500" cy="8.500" r="7" /></svg></TaskItem>
      <TaskItem className="ml-[3px]" bar="left-[4px] w-[40px]">
        <svg width="22" height="19" viewBox="0 0 22 19"><path d="M0 0h9l1.500 2H22v5H0z" fill="#e8a317" /><path d="M0 3.500h22V17H0z" fill="#ffd868" /><path d="M4 18.500V10h14v8.500h-4V14H8v4.500z" fill="#3d9be0" /></svg>
      </TaskItem>
      <TaskItem className="ml-px"><Chrome /></TaskItem>
      <TaskItem className="ml-px mr-px w-[44px]! bg-white/20" bar="left-0 w-[47px]"><Chrome /></TaskItem>
      <div className="w-[3px] bg-white/15" />
      <TaskItem className="ml-px" bar="left-[4px] w-[40px]">
        <svg width="25" height="23" viewBox="0 0 25 23" className="overflow-visible">
          <path d="M4 1h15v2l5 1v2H4L1 10V7z" fill="#111" /><path d="M5 1.500h13M3 5h14M10 7.500h13" stroke="#1f9cf0" strokeWidth="1.500" /><path d="M7 9.500h12" stroke="#999" />
          <text x="0" y="18" fontSize="8" fontWeight="700" fontFamily="Liberation Sans" fill="#1f9cf0" textLength="25" lengthAdjust="spacingAndGlyphs">FESTO</text>
          <text x="1" y="23" fontSize="5.500" fontWeight="700" fontFamily="Liberation Sans" fill="#050505" textLength="22" lengthAdjust="spacingAndGlyphs">FluidSIM</text>
        </svg>
      </TaskItem>
      <TaskItem className="ml-px" bar="left-[4px] w-[40px]">
        <svg width="24" height="22" viewBox="0 0 24 22"><path d="M6 0h18v5.500H6z" fill="#41a5ee" /><path d="M6 5.500h18V11H6z" fill="#2b7cd3" /><path d="M6 11h18v5.500H6z" fill="#185abd" /><path d="M6 16.500h18V21H6z" fill="#103f91" /><path d="M0 4.500h12v12H0z" fill="#1b5cbe" /><path d="M2.300 7.500l1.600 6L6 8.500l2 5 1.700-6" fill="none" stroke="#fff" strokeWidth="1.500" /></svg>
      </TaskItem>
      <div className={`${UI} ml-auto flex items-center text-[12px] text-white`}>
        <svg width="12" height="8" viewBox="0 0 12 8" fill="none" stroke="#fff" strokeWidth="1.300"><path d="M1 7l5-5 5 5" /></svg>
        <svg className="ml-[11px]" width="16" height="14" viewBox="0 0 16 14" fill="none" stroke="#fff"><path d="M5.500 4.500h9v6h-9zM15 6.500v2M1 3.500h4M1.500 3v3.500h3V3M3 7v4.500h3" /><path d="M7 6h6v3H7z" fill="#fff" stroke="none" /></svg>
        <svg className="ml-[9px]" width="15" height="15" viewBox="0 0 15 15" fill="none" stroke="#fff" strokeWidth="1.200"><path d="M1.500 14A12 12 0 0 1 13.500 2" opacity=".5" /><path d="M4.500 14a9 9 0 0 1 9-9M7.500 14a6 6 0 0 1 6-6M10.500 14a3 3 0 0 1 3-3" /></svg>
        <span className="ml-[9px] tracking-[-0.2px]">ENG</span>
        <div className="-mt-px ml-[10px] w-[66px] text-center leading-[18px] tracking-[-0.3px]"><div>03:34 PM</div><div>27-10-2020</div></div>
        <svg className="ml-[12px] mr-[25px]" width="16" height="16" viewBox="0 0 16 16" fill="none" stroke="#fff" strokeWidth="1.200"><path d="M.7 1.500h14.600v10.500H11L8 15v-3H.7z" /></svg>
      </div>
    </footer>
  );
}

export default function App() {
  return (
    <div className="flex h-[1080px] w-[1920px] flex-col overflow-hidden bg-[#2a2c2c]">
      <div className="flex h-[1039px]">
        <Browser />
        <FluidSim />
      </div>
      <Taskbar />
    </div>
  );
}
